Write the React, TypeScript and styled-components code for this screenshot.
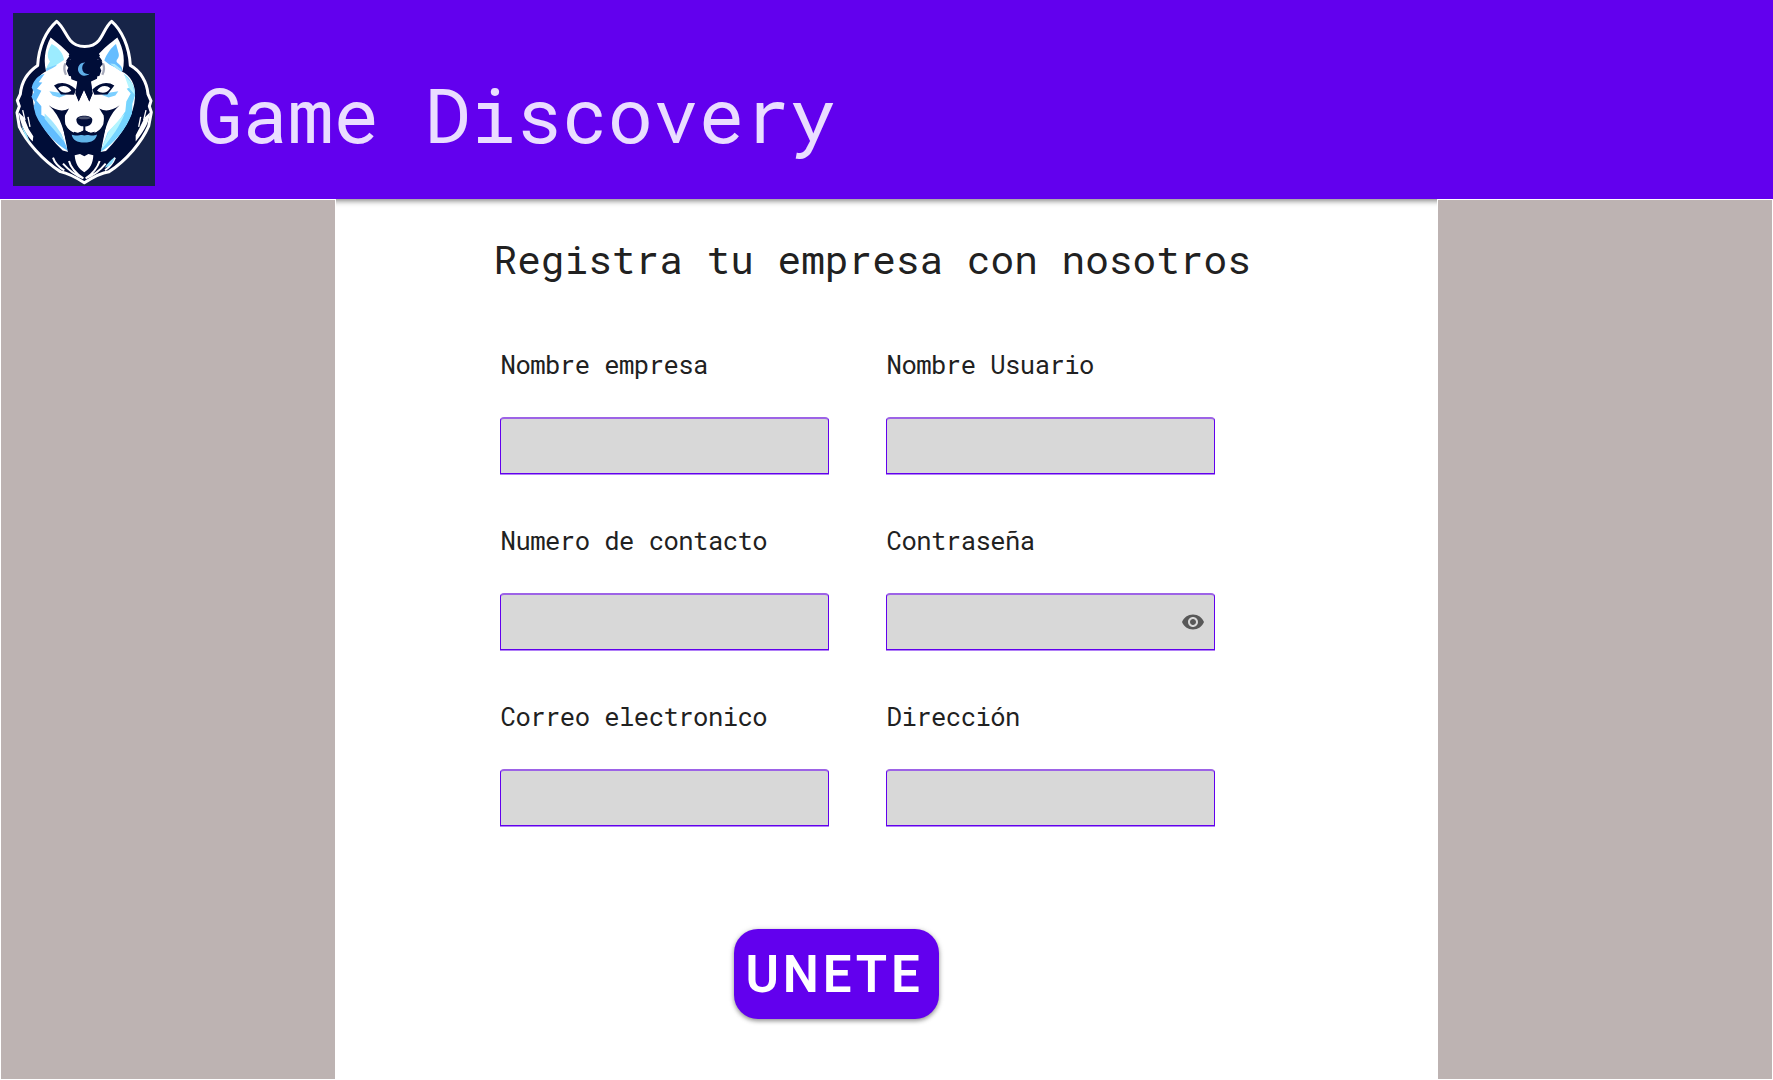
import React from "react";
import styled, { createGlobalStyle } from "styled-components";
import { MdVisibility } from "react-icons/md";

const mono = `"Roboto Mono", "DejaVu Sans Mono", monospace`;

const GlobalStyle = createGlobalStyle`
  * { box-sizing: border-box; }
  body { margin: 0; background: #fff; }
`;

const Page = styled.div`
  width: 1773px;
  height: 1080px;
  display: flex;
  flex-direction: column;
  overflow: hidden;
`;

const Header = styled.header`
  height: 199px;
  flex: none;
  display: flex;
  align-items: flex-start;
  padding: 13px;
  background: #6200ee;
  box-shadow: 0 2px 4px rgba(0, 0, 0, 0.3), 0 4px 5px rgba(0, 0, 0, 0.14);
`;

const Logo = styled.svg`
  width: 142px;
  height: 173px;
  flex: none;
  display: block;
`;

const Brand = styled.h1`
  margin: 51px 0 0 41.5px;
  font: 430 76.1px/100px ${mono};
  color: #eaddff;
  white-space: pre;
`;

const Body = styled.main`
  flex: 1;
  display: grid;
  grid-template-columns: 336px 1fr 336px;
`;

const SidePanel = styled.aside`
  position: relative;
  background: #bdb3b2;
  border: 1px solid #fff;
`;

const Content = styled.section`
  display: flex;
  flex-direction: column;
  align-items: flex-start;
  padding-left: 157px;
`;

const Title = styled.h2`
  margin: 34px 0 0 0.5px;
  font: 400 39.45px/52px ${mono};
  color: #212121;
  white-space: pre;
`;

const Form = styled.form`
  margin: 62.5px 0 0 7px;
  display: grid;
  grid-template-columns: 329px 329px;
  column-gap: 57px;
  row-gap: 49.5px;
`;

const Field = styled.label`
  height: 126.5px;
  display: flex;
  flex-direction: column;
  justify-content: space-between;
`;

const Caption = styled.span`
  padding-left: 0.6px;
  font: 400 25.6px/32px ${mono};
  letter-spacing: -0.55px;
  color: #212121;
  white-space: pre;
`;

const InputBox = styled.div`
  height: 57px;
  display: flex;
  align-items: center;
  padding-right: 9.5px;
  background: #d8d8d8;
  border: 1px solid #6200ee;
  border-top: 2px solid #9d63e6;
  border-radius: 4px 4px 0 0;
  box-shadow: 0 1px 0 #b180f6;
`;

const Input = styled.input`
  flex: 1;
  min-width: 0;
  height: 100%;
  padding: 0 12px;
  border: 0;
  outline: 0;
  background: transparent;
  font: 400 20px ${mono};
`;

const Eye = styled(MdVisibility)`
  width: 24px;
  height: 24px;
  color: #585858;
`;

const JoinButton = styled.button`
  margin: 103px 0 0 241px;
  width: 205px;
  height: 90px;
  padding: 2px 4px 0 0;
  border: 0;
  border-radius: 24px;
  background: #6200ee;
  color: #fff;
  font: 580 51px/88px Roboto, sans-serif;
  letter-spacing: 3.8px;
  box-shadow: 0 2px 4px rgba(0, 0, 0, 0.35), 0 1px 6px rgba(0, 0, 0, 0.15);
`;

const navy = "#000a38";

function WolfLogo() {
  return (
    <Logo viewBox="39 39 426 518" preserveAspectRatio="none" role="img" aria-label="Game Discovery">
      <defs>
        <filter id="soften" x="-0.1" y="-0.1" width="1.2" height="1.2">
          <feGaussianBlur stdDeviation="1.5" />
        </filter>
      </defs>
      <rect x="39" y="39" width="426" height="518" fill="#172448" />
      <g filter="url(#soften)">
        <path
          d="M170 64 C190 80 196 104 211 121 C232 145 276 145 296 122 C311 104 317 78 335 64 C365 90 388 140 391 196 C422 213 441 246 444 282 L453 302 L448 318 L454 336 L446 378 C426 424 380 480 327 514 C300 518 276 532 253 547 C229 532 208 520 181 514 C128 480 79 424 58 380 L51 337 L58 318 L52 301 L61 282 C64 246 83 216 113 196 C116 140 138 92 170 64Z"
          fill={navy}
          stroke="#fff"
          strokeWidth="9"
          strokeLinejoin="round"
        />
        <path d="M152 112 C172 128 196 146 212 166 C196 178 190 196 190 236 L142 225 C128 188 134 145 152 112Z M352 112 C332 128 308 146 293 166 C309 178 315 196 315 236 L363 225 C379 188 371 145 352 112Z" fill="#fff" />
        <path d="M155 132 C176 143 190 160 192 180 L170 194 L158 216 L141 222 C136 206 142 196 150 184 C138 170 144 150 155 132Z" fill="#9cecff" />
        <path d="M138 205 L170 194 L158 216 L141 222Z" fill="#7ccfff" />
        <path d="M348 132 C336 140 318 164 313 181 L329 194 L346 202 L365 218 C370 202 362 196 352 188 C344 178 360 176 356 160Z" fill="#65bdff" />
        <path d="M330 190 L344 192 L362 206 L366 216 L350 206Z" fill="#a7e9ff" />
        <path
          d="M134 216 C164 203 188 184 219 177 L210 205 L214 237 L232 244 L226 280 L236 304 L252 269 L268 304 L278 280 L273 244 L291 236 L295 205 L286 177 C318 184 344 207 373 218 C401 236 407 267 405 293 C402 342 371 400 318 452 L300 455 C307 435 307 425 298 409 L278 402 L252 397 L226 402 L209 409 C201 425 200 438 205 455 L188 451 C134 398 101 342 98 295 C95 263 107 233 134 216Z"
          fill="#fff"
        />
        <path d="M134 221 L116 246 L127 247 L111 266 L124 272 L109 300 L124 318 L124 344 L147 357 L183 400 L205 453 C164 430 128 390 107 344 L101 320 L105 306 L94 290 L102 276 L95 262 C102 238 116 225 134 221Z" fill="#62bdff" />
        <path d="M134 340 C158 362 184 392 192 424 C170 398 150 376 134 356Z" fill="#a2e6ff" />
        <path d="M371 220 C395 239 406 262 405 286 L397 311 L396 340 C378 387 344 429 301 455 L323 397 L356 363 L376 333 L379 304 L392 280 L380 266 L395 260Z" fill="#76d5ff" />
        <path d="M374 340 C360 377 337 410 304 448 L326 394Z M372 222 L398 252 L404 284 L386 262Z" fill="#b4f5ff" />
        <path d="M146 315 C166 330 187 336 207 325 L195 346 L193 370 C203 392 220 398 229 402 L213 410 L204 447 C194 401 185 348 146 315Z M359 315 C338 330 318 336 298 325 L311 346 L313 370 C303 392 286 398 277 402 L293 410 L302 447 C312 401 320 348 359 315Z" fill={navy} />
        <path d="M193 345 L196 372 C204 390 220 398 232 402 L274 402 C288 398 302 390 310 372 L313 345 L320 366 L302 456 L280 462 L265 458 L253 464 L240 458 L224 462 L204 456 L186 366Z M222 366 L284 366 L284 402 L222 402Z" fill={navy} fillRule="evenodd" />
        <path d="M196 362 C204 352 220 338 232 334 L274 334 C286 338 302 352 310 362 C306 384 288 396 272 398 L253 390 L234 398 C218 396 200 384 196 362Z" fill="#fff" />
        <path d="M215 163 L240 172 L264 172 L290 163 L284 178 L304 180 L308 192 L300 202 L304 212 L298 228 L278 230 L272 244 L277 280 L268 304 L252 269 L236 304 L228 280 L233 244 L227 230 L207 228 L201 212 L205 202 L197 192 L201 180 L222 178Z" fill={navy} />
        <path d="M214 152 C236 142 270 142 290 152 L300 166 L288 184 L216 184 L206 166Z" fill={navy} />
        <path d="M196 190 C191 202 193 214 198 224 M309 190 C314 202 312 214 307 224" fill="none" stroke={navy} strokeOpacity="0.35" strokeWidth="7" />
        <path d="M256 187 A20 20 0 1 0 269 220 A16 18 0 1 1 256 187Z" fill="#5eafe8" />
        <path d="M148 273 L180 278 L200 284 L178 292 L158 286Z M355 273 L326 278 L304 284 L326 292 L346 286Z" fill="#7bcfff" />
        <path d="M162 256 C182 243 207 247 228 268 L222 284 L183 283Z M343 256 C323 243 298 247 277 268 L283 284 L322 283Z" fill={navy} />
        <path d="M174 264 C188 252 206 258 214 272 C200 281 184 280 174 264Z M331 264 C317 252 299 258 291 272 C305 281 321 280 331 264Z" fill="#fff" />
        <path d="M229 359 C230 343 276 343 277 359 C276 376 264 379 253 379 C242 379 230 375 229 359Z" fill={navy} />
        <path d="M233 354 C242 346 266 346 273 354 L262 357 L243 357Z" fill="#4b5370" />
        <path d="M250 377 H256 V390 C269 401 285 400 299 393 L290 407 L216 407 L208 393 C224 400 239 401 250 390Z" fill={navy} />
        <path d="M215 403 C232 411 244 400 253 406 C264 400 275 411 291 403 C288 419 276 427 253 427 C230 427 218 419 215 403Z" fill="#60b4e9" />
        <path d="M56 336 L72 352 L86 386 L100 408 L98 424 C80 404 62 380 56 336Z M450 336 L434 352 L420 380 L407 405 L407 424 C424 401 446 376 450 336Z" fill="#fff" />
        <path d="M63 370 C69 388 83 400 89 426 C78 411 68 394 63 370Z" fill="#9eeaff" />
        <path d="M68 330 L75 360 M84 350 L90 380 M438 330 L431 360 M422 350 L416 380" fill="none" stroke="#fff" strokeWidth="4" />
        <path d="M224 465 L240 461 L253 468 L265 461 L280 465 C279 489 270 505 253 516 C235 505 226 489 224 465Z" fill="#fff" />
        <path d="M207 482 C213 506 232 522 250 534 C226 525 205 508 189 490 M299 482 C291 506 275 522 257 534 C281 525 302 508 317 490 M159 472 C165 490 177 501 193 510 M345 472 C338 490 329 500 315 510" fill="none" stroke="#fff" strokeWidth="6" />
        <path d="M344 471 C340 489 329 500 314 502 C323 490 333 478 344 471Z" fill="#8de2ff" />
      </g>
    </Logo>
  );
}

const fields = [
  { label: "Nombre empresa" },
  { label: "Nombre Usuario" },
  { label: "Numero de contacto" },
  { label: "Contraseña", secret: true },
  { label: "Correo electronico" },
  { label: "Dirección" },
];

export default function App() {
  return (
    <Page>
      <GlobalStyle />
      <Header>
        <WolfLogo />
        <Brand>Game Discovery</Brand>
      </Header>
      <Body>
        <SidePanel />
        <Content>
          <Title>Registra tu empresa con nosotros</Title>
          <Form>
            {fields.map((f) => (
              <Field key={f.label}>
                <Caption>{f.label}</Caption>
                <InputBox>
                  <Input type={f.secret ? "password" : "text"} />
                  {f.secret && <Eye />}
                </InputBox>
              </Field>
            ))}
          </Form>
          <JoinButton>UNETE</JoinButton>
        </Content>
        <SidePanel />
      </Body>
    </Page>
  );
}
